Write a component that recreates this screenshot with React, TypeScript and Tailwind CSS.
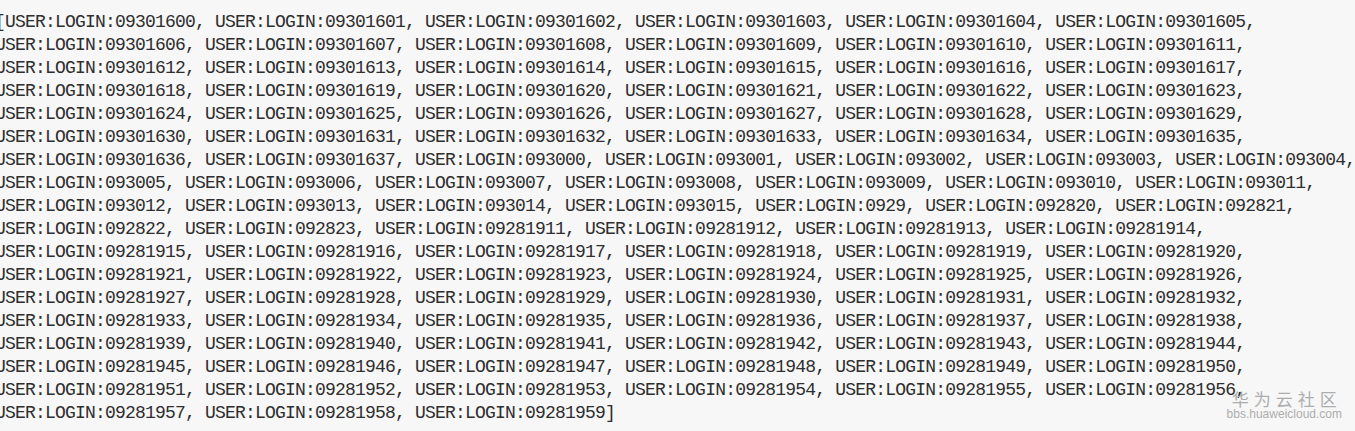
import React from "react";

const lines: string[] = [
  "[USER:LOGIN:09301600, USER:LOGIN:09301601, USER:LOGIN:09301602, USER:LOGIN:09301603, USER:LOGIN:09301604, USER:LOGIN:09301605,",
  "USER:LOGIN:09301606, USER:LOGIN:09301607, USER:LOGIN:09301608, USER:LOGIN:09301609, USER:LOGIN:09301610, USER:LOGIN:09301611,",
  "USER:LOGIN:09301612, USER:LOGIN:09301613, USER:LOGIN:09301614, USER:LOGIN:09301615, USER:LOGIN:09301616, USER:LOGIN:09301617,",
  "USER:LOGIN:09301618, USER:LOGIN:09301619, USER:LOGIN:09301620, USER:LOGIN:09301621, USER:LOGIN:09301622, USER:LOGIN:09301623,",
  "USER:LOGIN:09301624, USER:LOGIN:09301625, USER:LOGIN:09301626, USER:LOGIN:09301627, USER:LOGIN:09301628, USER:LOGIN:09301629,",
  "USER:LOGIN:09301630, USER:LOGIN:09301631, USER:LOGIN:09301632, USER:LOGIN:09301633, USER:LOGIN:09301634, USER:LOGIN:09301635,",
  "USER:LOGIN:09301636, USER:LOGIN:09301637, USER:LOGIN:093000, USER:LOGIN:093001, USER:LOGIN:093002, USER:LOGIN:093003, USER:LOGIN:093004,",
  "USER:LOGIN:093005, USER:LOGIN:093006, USER:LOGIN:093007, USER:LOGIN:093008, USER:LOGIN:093009, USER:LOGIN:093010, USER:LOGIN:093011,",
  "USER:LOGIN:093012, USER:LOGIN:093013, USER:LOGIN:093014, USER:LOGIN:093015, USER:LOGIN:0929, USER:LOGIN:092820, USER:LOGIN:092821,",
  "USER:LOGIN:092822, USER:LOGIN:092823, USER:LOGIN:09281911, USER:LOGIN:09281912, USER:LOGIN:09281913, USER:LOGIN:09281914,",
  "USER:LOGIN:09281915, USER:LOGIN:09281916, USER:LOGIN:09281917, USER:LOGIN:09281918, USER:LOGIN:09281919, USER:LOGIN:09281920,",
  "USER:LOGIN:09281921, USER:LOGIN:09281922, USER:LOGIN:09281923, USER:LOGIN:09281924, USER:LOGIN:09281925, USER:LOGIN:09281926,",
  "USER:LOGIN:09281927, USER:LOGIN:09281928, USER:LOGIN:09281929, USER:LOGIN:09281930, USER:LOGIN:09281931, USER:LOGIN:09281932,",
  "USER:LOGIN:09281933, USER:LOGIN:09281934, USER:LOGIN:09281935, USER:LOGIN:09281936, USER:LOGIN:09281937, USER:LOGIN:09281938,",
  "USER:LOGIN:09281939, USER:LOGIN:09281940, USER:LOGIN:09281941, USER:LOGIN:09281942, USER:LOGIN:09281943, USER:LOGIN:09281944,",
  "USER:LOGIN:09281945, USER:LOGIN:09281946, USER:LOGIN:09281947, USER:LOGIN:09281948, USER:LOGIN:09281949, USER:LOGIN:09281950,",
  "USER:LOGIN:09281951, USER:LOGIN:09281952, USER:LOGIN:09281953, USER:LOGIN:09281954, USER:LOGIN:09281955, USER:LOGIN:09281956,",
  "USER:LOGIN:09281957, USER:LOGIN:09281958, USER:LOGIN:09281959]",
];

export default function App() {
  return (
    <div className="relative w-[1355px] h-[431px] overflow-hidden bg-[#f7f7f7]">
      <div className="flex flex-col pt-[11px] ml-[-5px] font-['Liberation_Mono','Noto_Sans_CJK_SC',monospace] text-[18px] leading-[23px] tracking-[-0.8px] text-[#2e2e2e] whitespace-pre">
        {lines.map((l, i) => (
          <div key={i}>{l}</div>
        ))}
      </div>
      <div className="absolute right-[13px] bottom-[10px] flex flex-col items-center text-[#adadad]">
        <div className="font-['Noto_Sans_CJK_SC',sans-serif] text-[17px] leading-[19px] tracking-[5px] mr-[-5px]">
          华为云社区
        </div>
        <div className="font-['Liberation_Sans',Arial,sans-serif] text-[12px] leading-[13px]">
          bbs.huaweicloud.com
        </div>
      </div>
    </div>
  );
}
